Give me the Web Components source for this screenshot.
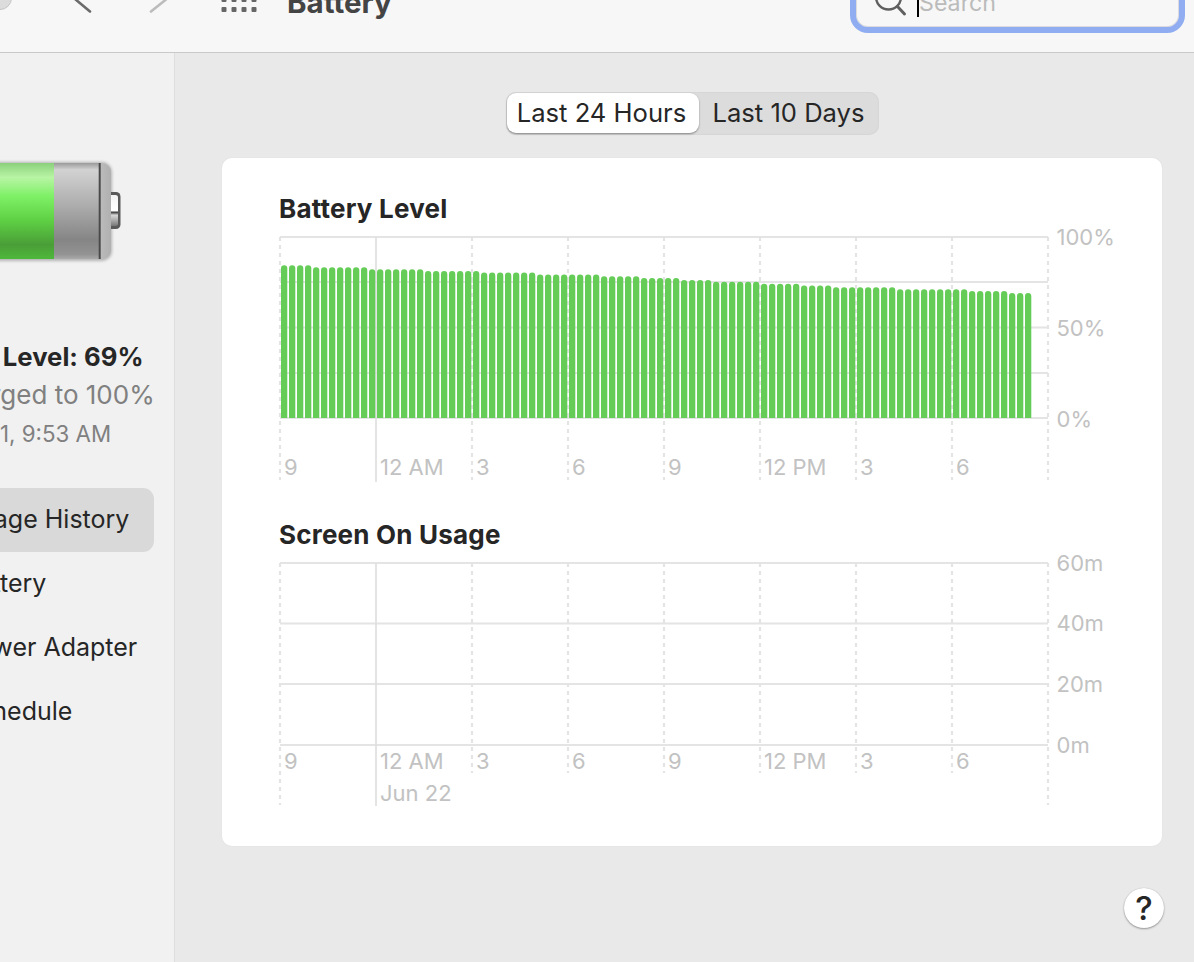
<!DOCTYPE html>
<html lang="en"><head><meta charset="utf-8"><title>Battery</title>
<style>
html,body{margin:0;padding:0;width:1194px;height:962px;overflow:hidden;background:#e9e9e9}
body{font-family:Inter,"Liberation Sans",sans-serif;color:#262626}
</style></head>
<body>
<app-window>
  <mac-toolbar slot="toolbar" heading="Battery"></mac-toolbar>
  <mac-sidebar slot="sidebar">
    <nav-row selected>Usage History</nav-row>
    <nav-row>Battery</nav-row>
    <nav-row>Power Adapter</nav-row>
    <nav-row>Schedule</nav-row>
  </mac-sidebar>
  <seg-control></seg-control>
  <chart-card>
    <usage-chart kind="level" heading="Battery Level"></usage-chart>
    <usage-chart kind="screen" heading="Screen On Usage"></usage-chart>
  </chart-card>
  <help-button></help-button>
</app-window>
<script>
function shadow(el, html){ el.attachShadow({mode:'open'}).innerHTML = html; }

customElements.define('app-window', class extends HTMLElement{
  constructor(){super();shadow(this,`<style>
    :host{display:flex;flex-direction:column;width:1194px;height:962px;overflow:hidden}
    .body{display:flex;flex:1;min-height:0}
    .pane{flex:1;background:#e9e9e9;display:flex;flex-direction:column;align-items:flex-start;padding:39px 32px 0 47px;min-width:0}
  </style><slot name="toolbar"></slot><div class="body"><slot name="sidebar"></slot><div class="pane"><slot></slot></div></div>`);}
});

customElements.define('mac-toolbar', class extends HTMLElement{
  constructor(){super();shadow(this,`<style>
    :host{display:block;height:52px;background:#f7f7f7;border-bottom:1px solid #c9c9c9;position:relative;overflow:hidden;flex:none}
    .row{display:flex;align-items:flex-end;height:52px}
    svg{display:block;flex:none}
    h1{margin:0 0 35.5px 30px;font:700 29.5px/30px Inter,sans-serif;color:#444;white-space:nowrap;width:563px}
    .field{position:relative;flex:none;box-sizing:border-box;width:335px;height:64px;margin-bottom:19px;border:6.5px solid #8fadf0;border-radius:18px;background:#f7f7f7;display:flex;align-items:flex-end;padding:0 0 10px 61px;font:23.2px/30px Inter,sans-serif;color:#bbb;box-shadow:inset 0 0 0 1px #dcdcdc}
    .field span{border-left:2px solid #000;height:26px;line-height:24px}
    .glass{position:absolute;left:9px;top:0}
  </style><div class="row">
    <svg width="257" height="52" viewBox="0 0 257 52" aria-hidden="true">
      <circle cx="0" cy="-2" r="11.5" fill="#dcdcdc" stroke="#c6c6c6"/>
      <path d="M72 -3.5L90 11.5" fill="none" stroke="#6b6b6b" stroke-width="2.6" stroke-linecap="round"/>
      <path d="M166 -.5L151 11.5" fill="none" stroke="#bcbcbc" stroke-width="2.6" stroke-linecap="round"/>
      <g fill="#666">
        ${[221.5,231.5,241.5,251.5].map(x=>`<rect x="${x}" y="7" width="5" height="5" rx="1"/><rect x="${x}" y="-3" width="5" height="5" rx="1"/>`).join('')}
      </g>
    </svg>
    <h1></h1>
    <div class="field"><span>Search</span>
      <svg class="glass" width="50" height="52" viewBox="0 0 50 52" aria-hidden="true"><circle cx="23.5" cy="22" r="12.5" fill="none" stroke="#5f5f5f" stroke-width="2.4"/><path d="M32.5 31.5L39.5 39" stroke="#5f5f5f" stroke-width="3" stroke-linecap="round"/></svg>
    </div>
  </div>`);
  this.shadowRoot.querySelector('h1').textContent=this.getAttribute('heading');}
});

customElements.define('mac-sidebar', class extends HTMLElement{
  constructor(){super();shadow(this,`<style>
    :host{display:block;flex:none;width:174px;background:#f1f1f1;border-right:1px solid #dedede;overflow:hidden}
    .inner{width:296px;margin-left:-122px;display:flex;flex-direction:column;align-items:center}
    svg{display:block;margin-top:97px}
    .lvl{margin:63px 3px 0 0;font:700 25.7px/38px Inter,sans-serif;color:#262626;white-space:nowrap}
    .chg{margin-right:10px;font:26px/38px Inter,sans-serif;color:#808080;white-space:nowrap}
    .dt{font:22.3px/40px Inter,sans-serif;color:#808080;white-space:nowrap}
    nav{align-self:stretch;margin-top:34px;padding:0 20px;display:flex;flex-direction:column}
  </style><div class="inner">
    <svg width="296" height="125" viewBox="-122 150 296 125" aria-hidden="true">
      <defs>
        <linearGradient id="g" x1="0" y1="0" x2="0" y2="1"><stop offset="0" stop-color="#8bd07c"/><stop offset=".15" stop-color="#b8f5a4"/><stop offset=".35" stop-color="#7df065"/><stop offset=".6" stop-color="#5ed044"/><stop offset=".85" stop-color="#4a9e37"/><stop offset="1" stop-color="#4eb83b"/></linearGradient>
        <linearGradient id="s" x1="0" y1="0" x2="0" y2="1"><stop offset="0" stop-color="#9a9a9a"/><stop offset=".07" stop-color="#d2d2d2"/><stop offset=".45" stop-color="#acacac"/><stop offset=".8" stop-color="#858585"/><stop offset=".95" stop-color="#939393"/><stop offset="1" stop-color="#aaa"/></linearGradient>
        <linearGradient id="c" x1="0" y1="0" x2="1" y2="0"><stop offset="0" stop-color="#bdbdbd"/><stop offset=".35" stop-color="#fbfbfb"/><stop offset=".75" stop-color="#ececec"/><stop offset="1" stop-color="#b0b0b0"/></linearGradient>
        <linearGradient id="t" x1="0" y1="0" x2="0" y2="1"><stop offset="0" stop-color="#f4f4f4"/><stop offset=".5" stop-color="#fff"/><stop offset=".56" stop-color="#444"/><stop offset=".65" stop-color="#d8d8d8"/><stop offset="1" stop-color="#777"/></linearGradient>
        <filter id="b"><feGaussianBlur stdDeviation="1.5"/></filter>
      </defs>
      <rect x="-122" y="162" width="234" height="99" rx="10" fill="#000" opacity=".25" filter="url(#b)"/>
      <rect x="106" y="192" width="14.5" height="37" rx="4.5" fill="#5a5a5a"/>
      <rect x="108" y="195" width="10" height="31" rx="2.5" fill="url(#t)"/>
      <path d="M-122 163H102a9 9 0 0 1 9 9v78a9 9 0 0 1-9 9H-122Z" fill="url(#c)"/>
      <rect x="-122" y="163" width="222" height="96" fill="url(#s)"/>
      <rect x="-122" y="163" width="176" height="96" fill="url(#g)"/>
      <rect x="98.7" y="163" width="2" height="96" fill="#4a4a4a"/>
    </svg>
    <div class="lvl">Battery Level: 69%</div>
    <div class="chg">Last charged to 100%</div>
    <div class="dt">Jun 21, 9:53 AM</div>
    <nav><slot></slot></nav>
  </div>`);}
});

customElements.define('nav-row', class extends HTMLElement{
  constructor(){super();shadow(this,`<style>
    :host{display:flex;align-items:center;box-sizing:border-box;height:64px;padding:0 0 2px 64px;border-radius:11px;font:25px/30px Inter,sans-serif;color:#262626;white-space:nowrap}
    :host([selected]){background:#d9d9d9}
  </style><slot></slot>`);}
});

customElements.define('seg-control', class extends HTMLElement{
  constructor(){super();shadow(this,`<style>
    :host{display:flex;box-sizing:border-box;align-self:center;width:373px;height:43px;padding:1px;background:#dcdcdc;border-radius:10px;box-shadow:inset 0 0 0 1px #d6d6d6;font:25.6px/40px Inter,sans-serif;color:#262626;margin-left:1px}
    div{display:flex;align-items:center;justify-content:center;white-space:nowrap;height:40px}
    .on{width:192px;background:#fff;border-radius:9px;box-shadow:0 1px 2px rgba(0,0,0,.4);padding-right:3px;box-sizing:border-box}
    .off{flex:1}
  </style><div class="on">Last 24 Hours</div><div class="off">Last 10 Days</div>`);}
});

customElements.define('chart-card', class extends HTMLElement{
  constructor(){super();shadow(this,`<style>
    :host{display:flex;flex-direction:column;gap:30px;box-sizing:border-box;width:940px;height:688px;margin-top:23px;padding:36px 0 0 58px;background:#fff;border-radius:10px;box-shadow:0 0 0 1px #e6e6e6}
  </style><slot></slot>`);}
});

customElements.define('usage-chart', class extends HTMLElement{
  constructor(){super();
    const level=this.getAttribute('kind')==='level';
    const top=level?232:558, h=level?258:254;
    const xs=[280,376,472,568,664,760,856,952,1048];
    const hy=level?[237,282,327.5,373,418]:[563,623.5,684,745];
    const end=level?480:773, endLong=level?482:806;
    let g='';
    hy.forEach(y=>g+=`<line x1="280" x2="1048" y1="${y}" y2="${y}" stroke="#e4e4e4" stroke-width="2"/>`);
    xs.forEach((x,i)=>{
      const y0=hy[0];
      if(i===1) g+=`<line x1="${x}" x2="${x}" y1="${y0}" y2="${endLong}" stroke="#dedede" stroke-width="1.6"/>`;
      else g+=`<line x1="${x}" x2="${x}" y1="${y0}" y2="${(!level&&(i===0||i===8))?805:end}" stroke="#e4e4e4" stroke-width="2.2" stroke-dasharray="4 4"/>`;
    });
    let bars='';
    if(level){
      const tops=[[0,265.3],[4,267.3],[11,269.3],[18,271],[25,272.5],[32,274.5],[40,276.3],[45,278],[50,280],[54,281.8],[60,283.7],[65,285.4],[69,287.3],[77,289.3],[86,291],[91,293]];
      for(let i=0;i<94;i++){
        let t=265; tops.forEach(p=>{if(i>=p[0])t=p[1]});
        const x=281+8*i;
        bars+=`<path d="M${x} 418V${t+3.15}a3.15 3.15 0 0 1 6.3 0V418Z" fill="#64cc57"/>`;
      }
    }
    const labels=['9','12 AM','3','6','9','12 PM','3','6'];
    const ly=level?475:769;
    let tx=labels.map((l,i)=>`<text x="${xs[i]+4}" y="${ly}">${l}</text>`).join('');
    if(!level) tx+=`<text x="380" y="801">Jun 22</text>`;
    const yl=level?[['100%',245],['50%',336],['0%',427]]:[['60m',571],['40m',631],['20m',692],['0m',753]];
    tx+=yl.map(a=>`<text x="1056.5" y="${a[1]}">${a[0]}</text>`).join('');
    shadow(this,`<style>
      :host{display:block}
      h2{margin:0 0 8px -1px;font:700 26px/30px Inter,sans-serif;letter-spacing:.2px;color:#262626;white-space:nowrap}
      svg{display:block;overflow:visible}
      text{font:22px Inter,sans-serif;fill:#c2c2c2}
    </style><h2>${this.getAttribute('heading')}</h2>
    <svg width="882" height="${h}" viewBox="280 ${top} 882 ${h}">${g}${bars}${tx}</svg>`);
  }
});

customElements.define('help-button', class extends HTMLElement{
  constructor(){super();shadow(this,`<style>
    :host{display:flex;align-items:center;justify-content:center;align-self:flex-end;width:40px;height:40px;margin:42px -2px 0 0;border-radius:50%;background:#fff;box-shadow:0 1px 2px rgba(0,0,0,.35),0 0 1px rgba(0,0,0,.2);font:500 33px/40px Inter,sans-serif;color:#262626}
  </style>?`);}
});
</script>
</body></html>
